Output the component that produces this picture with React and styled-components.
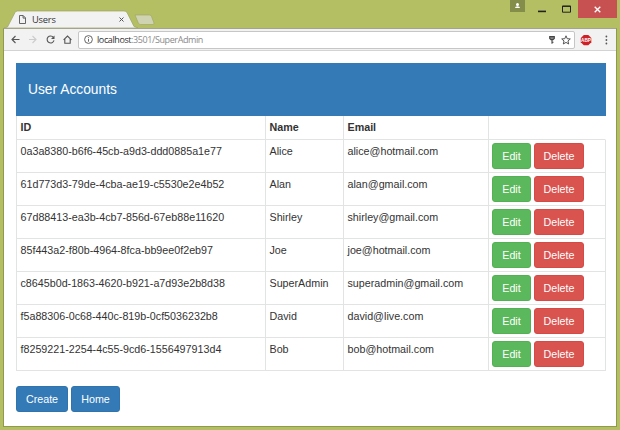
import React from "react";
import styled, { createGlobalStyle } from "styled-components";

const Global = createGlobalStyle`
  * { box-sizing: border-box; }
  body { margin: 0; background: #b4be62; overflow: hidden; }
`;

const Window = styled.div`
  width: 620px;
  height: 430px;
  display: flex;
  flex-direction: column;
  padding: 0 3px 3px;
  background: #b4be62;
  font-family: "Liberation Sans", Arial, sans-serif;
  color: #333;
`;

const TitleBar = styled.header`
  height: 28px;
  flex: none;
  display: flex;
  justify-content: space-between;
  align-items: flex-start;
`;

const TabStrip = styled.div`
  position: relative;
  width: 156px;
  height: 28px;
  margin-left: 1px;
  padding: 11px 0 0 15px;
  display: flex;
  align-items: flex-start;
`;

const TabShape = styled.svg`
  position: absolute;
  left: 0;
  top: 10px;
`;

const TabContent = styled.div`
  position: relative;
  width: 105px;
  height: 17px;
  display: flex;
  align-items: center;
  gap: 5px;
`;

const TabTitle = styled.span`
  flex: 1;
  font: 9.3px/17px "Open Sans", "Noto Sans", sans-serif;
  letter-spacing: -0.2px;
  color: #333;
`;

const Controls = styled.div`
  display: flex;
  align-items: flex-start;
`;

const Profile = styled.div`
  width: 15px;
  height: 12px;
  margin-right: 5px;
  display: flex;
  justify-content: center;
  background: #858d4b;
`;

const WindowButton = styled.div`
  width: ${(p) => p.$width}px;
  height: 18px;
  display: flex;
  align-items: center;
  justify-content: center;
  background: ${(p) => p.$background || "transparent"};
`;

const Browser = styled.main`
  flex: 1;
  min-height: 0;
  display: flex;
  flex-direction: column;
  border: 1px solid #8f9a4c;
  border-top-color: #a3a58c;
  background: #fff;
`;

const Toolbar = styled.nav`
  height: 22px;
  flex: none;
  display: flex;
  align-items: center;
  padding-left: 7px;
  background: #f2f2f2;
  border-bottom: 1px solid #d3d3d3;
`;

const NavIcons = styled.div`
  width: 67px;
  display: flex;
  align-items: center;
`;

const AddressBar = styled.div`
  width: 497px;
  height: 18px;
  display: flex;
  align-items: center;
  padding: 0 3px 0 5px;
  background: #fff;
  border: 1px solid #c6c6c6;
  border-radius: 2px;
`;

const Url = styled.span`
  flex: 1;
  margin-left: 4px;
  font: 9px/16px "Open Sans", "Noto Sans", sans-serif;
  letter-spacing: ${(p) => p.$tracking}px;
  color: #8a8a8a;
`;

const Host = styled.span`
  color: #333;
`;

const Page = styled.section`
  padding: 12px 10px 0 12px;
`;

const Banner = styled.h1`
  height: 53px;
  margin: 0;
  padding-left: 12px;
  display: flex;
  align-items: center;
  background: #337ab7;
  color: #fff;
  font-size: 13.8px;
  font-weight: 400;
`;

const Table = styled.div`
  width: 590px;
  border-left: 1px solid #e2e4e4;
`;

const Row = styled.div`
  display: grid;
  grid-template-columns: 249px 78px 145px 117px;
  height: ${(p) => (p.$head ? 24 : 33)}px;
  font-size: 10.72px;
  font-weight: ${(p) => (p.$head ? 700 : 400)};
  line-height: 15px;
`;

const Cell = styled.div`
  padding: 4px 0 0 3.5px;
  border-bottom: 1px solid #e2e4e4;
  border-right: 1px solid ${(p) => (p.$open ? "transparent" : "#e2e4e4")};
`;

const ActionCell = styled(Cell)`
  display: flex;
  gap: 3px;
  align-items: flex-start;
  padding: 3px 0 0 3px;
`;

const tones = {
  edit: ["#5cb85c", "#53b153"],
  remove: ["#d9534f", "#d64945"],
  primary: ["#337ab7", "#3074ae"],
};

const Button = styled.button`
  width: ${(p) => p.$width}px;
  height: 26px;
  padding: 0;
  border: 1px solid ${(p) => tones[p.$tone][1]};
  border-radius: 3px;
  background: ${(p) => tones[p.$tone][0]};
  color: #fff;
  font: 10.72px/15px "Liberation Sans", Arial, sans-serif;
`;

const Footer = styled.footer`
  display: flex;
  gap: 3px;
  margin-top: 15px;
`;

const users = [
  ["0a3a8380-b6f6-45cb-a9d3-ddd0885a1e77", "Alice", "alice@hotmail.com"],
  ["61d773d3-79de-4cba-ae19-c5530e2e4b52", "Alan", "alan@gmail.com"],
  ["67d88413-ea3b-4cb7-856d-67eb88e11620", "Shirley", "shirley@gmail.com"],
  ["85f443a2-f80b-4964-8fca-bb9ee0f2eb97", "Joe", "joe@hotmail.com"],
  ["c8645b0d-1863-4620-b921-a7d93e2b8d38", "SuperAdmin", "superadmin@gmail.com"],
  ["f5a88306-0c68-440c-819b-0cf5036232b8", "David", "david@live.com"],
  ["f8259221-2254-4c55-9cd6-1556497913d4", "Bob", "bob@hotmail.com"],
];

const Icon = styled.svg`
  flex: none;
  display: block;
  margin-right: ${(p) => p.$gap || 0}px;
  fill: none;
  stroke: ${(p) => p.$color || "#555"};
  stroke-width: ${(p) => p.$weight || 1.1};
`;

export default function App() {
  return (
    <Window>
      <Global />
      <TitleBar>
        <TabStrip>
          <TabShape width="156" height="18" viewBox="0 0 156 18">
            <path d="M0 18 L3.5 17 L11 2.5 Q12 1 13.5 1 H120 Q122 1 123 2.5 L130 16.5 L134 18Z" fill="#f2f2f2" stroke="#9da365" strokeWidth=".7" />
            <path d="M131 5 H145.500 Q147 5 147.500 6.500 L150 13 Q150.300 14.500 149 14.500 H136.500 Q135 14.500 134.300 13Z" fill="#d0d3b2" stroke="#a2a86a" strokeWidth=".7" />
          </TabShape>
          <TabContent>
            <Icon width="7" height="9" viewBox="0 0 7 9" $weight={0.9} $gap={1}>
              <path d="M.5.5h3.700l2.300 2.400v5.600h-6zM4.100.7v2.400h2.300" />
            </Icon>
            <TabTitle>Users</TabTitle>
            <Icon width="5" height="5" viewBox="0 0 5 5" $weight={1}>
              <path d="M.5.5l4 4M4.500.5l-4 4" />
            </Icon>
          </TabContent>
        </TabStrip>
        <Controls>
          <Profile>
            <svg width="7" height="9" viewBox="0 0 7 9">
              <circle cx="3.500" cy="4.400" r="1.500" fill="#fff" />
              <path d="M1 8q0-1.700 2.500-1.700T6 8z" fill="#fff" />
            </svg>
          </Profile>
          <WindowButton $width={24}>
            <Icon width="8" height="8" viewBox="0 0 8 8" $color="#222" $weight={1.600}>
              <path d="M0 6.400h8" />
            </Icon>
          </WindowButton>
          <WindowButton $width={24}>
            <Icon width="9" height="8" viewBox="0 0 9 8" $color="#222" $weight={1}>
              <path d="M.5 1h8v6.200h-8zM0 1.400h9" />
            </Icon>
          </WindowButton>
          <WindowButton $width={39} $background="#c75050">
            <Icon width="7" height="7" viewBox="0 0 7 7" $color="#fff" $weight={1.300}>
              <path d="M.7.7l5.600 5.600M6.300.7L.7 6.300" />
            </Icon>
          </WindowButton>
        </Controls>
      </TitleBar>
      <Browser>
        <Toolbar>
          <NavIcons>
            <Icon width="9" height="9" viewBox="0 0 9 9" $gap={9}>
              <path d="M8.500 4.500H1M4.500 1L1 4.500 4.500 8" />
            </Icon>
            <Icon width="8" height="9" viewBox="0 0 8 9" $gap={9} $color="#ccc">
              <path d="M0 4.500h7M3.500 1L7 4.500 3.500 8" />
            </Icon>
            <Icon width="9" height="9" viewBox="0 0 9 9" $gap={8}>
              <path d="M7.400 2.300A3.500 3.500 0 1 0 8 5.400" />
              <path d="M8.500.5v3.600H5z" fill="#555" stroke="none" />
            </Icon>
            <Icon width="9" height="9" viewBox="0 0 9 9">
              <path d="M.6 4.800L4.500 1l3.900 3.800M1.800 4v4.200h5.400V4" />
            </Icon>
          </NavIcons>
          <AddressBar>
            <Icon width="9" height="9" viewBox="0 0 9 9" $weight={0.9}>
              <circle cx="4.500" cy="4.500" r="3.900" />
              <path d="M4.500 4v2.700M4.500 2.200v1" />
            </Icon>
            <Url $tracking={-0.4}><Host>localhost</Host>:3501/SuperAdmin</Url>
            <Icon width="6" height="8" viewBox="0 0 6 8" $gap={6} $color="#444" $weight={1.100}>
              <path d="M.7.6h4.600v1.800L4 3.600H2L.7 2.400z" fill="#888" />
              <path d="M3 3v4.800M3 6.200h1.500" />
            </Icon>
            <Icon width="10" height="10" viewBox="0 0 10 10" $weight={1}>
              <path d="M5 .8l1.200 2.900 3.100.25-2.350 2 .75 3.050L5 7.400 2.300 9l.75-3.050-2.350-2 3.100-.25z" />
            </Icon>
          </AddressBar>
          <svg width="39" height="12" viewBox="0 0 39 12">
            <path d="M8.800 1h4.500l3 3v4.200l-3 3H8.800l-3-3V4z" fill="#cf2028" />
            <text x="11.050" y="7.900" textAnchor="middle" fontFamily="Liberation Sans, sans-serif" fontWeight="700" fontSize="4.700" fill="#fff">ABP</text>
            <g fill="#555"><circle cx="31.400" cy="2.500" r=".9" /><circle cx="31.400" cy="6" r=".9" /><circle cx="31.400" cy="9.500" r=".9" /></g>
          </svg>
        </Toolbar>
        <Page>
          <Banner>User Accounts</Banner>
          <Table>
            <Row $head>
              <Cell>ID</Cell>
              <Cell>Name</Cell>
              <Cell>Email</Cell>
              <Cell $open />
            </Row>
            {users.map(([id, name, email]) => (
              <Row key={id}>
                <Cell>{id}</Cell>
                <Cell>{name}</Cell>
                <Cell>{email}</Cell>
                <ActionCell>
                  <Button $tone="edit" $width={39}>Edit</Button>
                  <Button $tone="remove" $width={50}>Delete</Button>
                </ActionCell>
              </Row>
            ))}
          </Table>
          <Footer>
            <Button $tone="primary" $width={52}>Create</Button>
            <Button $tone="primary" $width={49}>Home</Button>
          </Footer>
        </Page>
      </Browser>
    </Window>
  );
}
